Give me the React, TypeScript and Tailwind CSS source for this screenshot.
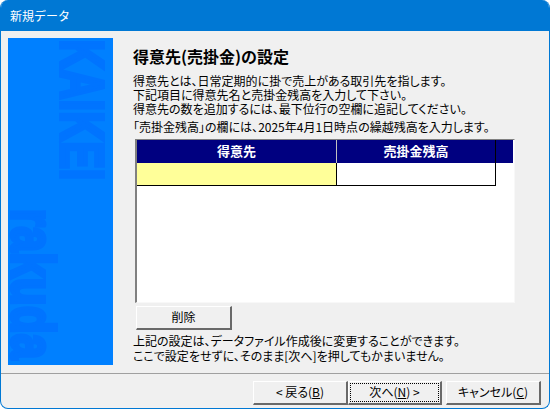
import React from 'react';

const font = "font-['Noto_Sans_CJK_JP','Noto_Sans',sans-serif]";
const palt = "[font-feature-settings:'palt']";

function WizardButton({ children, focused = false, className = '' }: { children: React.ReactNode; focused?: boolean; className?: string }) {
    return (
        <div className={`h-[24px] flex items-stretch bg-[#f0f0f0] border-t border-l border-t-white border-l-white border-r-2 border-b-2 border-r-[#696969] border-b-[#696969] ${className}`}>
            <div className={`flex-1 flex items-center justify-center pb-px text-[12px] leading-none text-black ${palt} ${focused ? 'm-px border border-dotted border-black' : ''}`}>
                {children}
            </div>
        </div>
    );
}

export default function App() {
    return (
        <div className={`w-[550px] h-[409px] bg-white overflow-hidden ${font}`}>
            <div className="w-full h-full flex flex-col bg-[#f0f0f0] border border-t-0 border-[#0078d4] rounded-[8px] overflow-hidden">
                {/* Title bar */}
                <div className="h-[31px] shrink-0 -mx-px bg-[#0078d4] flex items-center pl-[10px] text-[12px] text-white">
                    新規データ
                </div>

                {/* Body */}
                <div className="flex-1 flex pl-[7px] pt-[7px] min-h-0">
                    {/* Side banner */}
                    <div className="relative w-[105px] h-[327px] bg-[#0080ff] shrink-0">
                        <div className="absolute left-[52px] top-[4px] w-[45px] h-[135px] flex items-center justify-center">
                            <span className="rotate-90 scale-x-[0.67] whitespace-nowrap font-['Liberation_Sans'] font-bold text-[#0074ff] text-[62px] leading-none [-webkit-text-stroke:4px_#0074ff]">KAIKEI</span>
                        </div>
                        <div className="absolute left-[-3px] top-[170px] w-[56px] h-[152px] flex items-center justify-center">
                            <span className="rotate-90 scale-x-[0.74] whitespace-nowrap font-['Liberation_Sans'] font-bold text-[#0074ff] text-[62px] leading-none [-webkit-text-stroke:4px_#0074ff]">rakuda</span>
                        </div>
                    </div>

                    {/* Main */}
                    <div className="flex-1 pl-[20px] flex flex-col min-w-0">
                        <h1 className="mt-[8px] h-[20px] text-[16px] leading-[20px] font-bold text-black">得意先(売掛金)の設定</h1>
                        <div className={`mt-[8px] text-[12px] leading-[14px] text-black whitespace-nowrap ${palt}`}>
                            <p>得意先とは、日常定期的に掛で売上がある取引先を指します。</p>
                            <p>下記項目に得意先名と売掛金残高を入力して下さい。</p>
                            <p>得意先の数を追加するには、最下位行の空欄に追記してください。</p>
                        </div>
                        <p className={`mt-[4px] text-[12px] leading-[14px] text-black whitespace-nowrap ${palt}`}>「売掛金残高」の欄には、2025年4月1日時点の繰越残高を入力します。</p>

                        {/* Grid */}
                        <div className="mt-[5px] ml-[2px] w-[380px] h-[164px] bg-white border-t border-l-2 border-t-[#808080] border-l-[#808080] border-r border-b border-r-[#f8f8f8] border-b-[#f8f8f8] overflow-hidden">
                            <div className="h-[23px] w-[376px] flex bg-[#000080] text-white text-[13px] font-bold leading-none">
                                <div className="w-[200px] flex items-center justify-center pb-[2px] border-r border-r-[#c0c0c0]">得意先</div>
                                <div className="w-[159px] flex items-center justify-center pb-[2px] border-r border-r-black">売掛金残高</div>
                            </div>
                            <div className="h-[23px] w-[359px] flex border-b border-r border-black">
                                <div className="w-[200px] bg-[#ffff99] border-r border-black"></div>
                                <div className="flex-1 bg-white"></div>
                            </div>
                        </div>

                        <WizardButton className="mt-[3px] ml-[3px] w-[96px]">削除</WizardButton>

                        <div className={`mt-[3px] text-[12px] leading-[15px] text-black whitespace-nowrap ${palt}`}>
                            <p>上記の設定は、データファイル作成後に変更することができます。</p>
                            <p>ここで設定をせずに、そのまま[次へ]を押してもかまいません。</p>
                        </div>
                    </div>
                </div>

                {/* Footer */}
                <div className="h-[35px] shrink-0 border-t border-t-[#a0a0a0] flex items-start justify-end pt-[7px] pr-[8px]">
                    <WizardButton className="w-[95px]">&lt; 戻る(<span className="underline">B</span>)</WizardButton>
                    <WizardButton focused className="w-[94px]">次へ(<span className="underline">N</span>) &gt;</WizardButton>
                    <WizardButton className="w-[95px] ml-[4px]">キャンセル(<span className="underline">C</span>)</WizardButton>
                </div>
            </div>
        </div>
    );
}
